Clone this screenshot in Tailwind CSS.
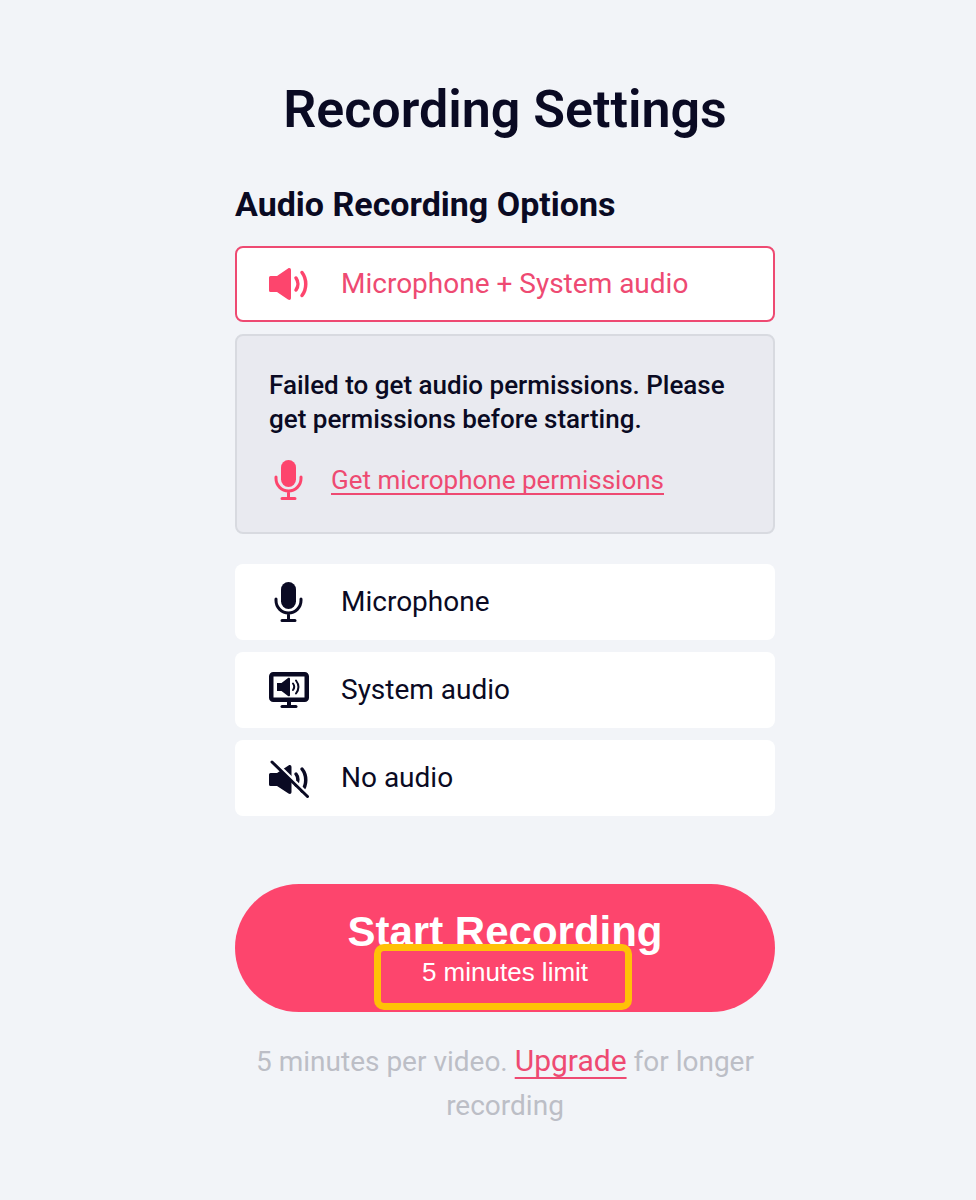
<!DOCTYPE html>
<html lang="en">
<head>
    <meta charset="UTF-8">
    <title>Recording Settings</title>
    <script src="https://cdn.jsdelivr.net/npm/@tailwindcss/browser@4"></script>
</head>
<body class="bg-[#f2f4f8] font-['Roboto',sans-serif] text-[#0a0a23]">
    <div class="h-[1200px] w-[540px] ml-[235px] pt-[80px]">
        <h1 class="text-center text-[52px] leading-[60px] font-semibold">Recording Settings</h1>
        <h2 class="mt-[44px] text-[34px] leading-[40px] font-bold">Audio Recording Options</h2>

        <!-- Options -->
        <div class="mt-[22px] h-[76px] flex items-center rounded-[8px] border-2 border-[#ee4a72] bg-white pl-[32px] text-[#ee4a72]">
            <svg class="w-[42px] h-[42px] text-[#fd456d]" viewBox="0 0 42 42" fill="none">
                <path d="M0 14.500A1.500 1.500 0 0 1 1.500 13H8L19 5.500c1.500-1 3-.3 3 1.500v28c0 1.800-1.500 2.500-3 1.500L8 29H1.500A1.500 1.500 0 0 1 0 27.500z" fill="currentColor"/>
                <path d="M27 15c2.500 3.500 2.500 8.500 0 12M33 9.500c5 6.500 5 16.500 0 23" stroke="currentColor" stroke-width="3.500" stroke-linecap="round"/>
            </svg>
            <span class="ml-[30px] text-[28px]">Microphone + System audio</span>
        </div>

        <div class="mt-[12px] h-[200px] rounded-[8px] border-2 border-[#d8dae0] bg-[#e9eaf0] pl-[32px] pr-[20px] pt-[32px]">
            <p class="text-[26px] leading-[34px] font-medium">Failed to get audio permissions. Please get permissions before starting.</p>
            <div class="mt-[23px] flex items-center text-[#ee4a72]">
                <svg class="w-[42px] h-[42px] text-[#fd456d]" viewBox="0 0 42 42" fill="none">
                    <rect x="12" y="1" width="15" height="27" rx="7.500" fill="currentColor"/>
                    <path d="M7 18v1.500a12.500 12.500 0 0 0 25 0V18M19.500 33v6M13 39.500h13" stroke="currentColor" stroke-width="3" stroke-linecap="round"/>
                </svg>
                <a class="ml-[20px] text-[26px] underline decoration-2 underline-offset-[4px] [text-decoration-skip-ink:none]">Get microphone permissions</a>
            </div>
        </div>

        <div class="mt-[30px] h-[76px] flex items-center rounded-[8px] bg-white pl-[34px]">
            <svg class="w-[42px] h-[42px]" viewBox="0 0 42 42" fill="none">
                <rect x="12" y="1" width="15" height="27" rx="7.500" fill="currentColor"/>
                <path d="M7 18v1.500a12.500 12.500 0 0 0 25 0V18M19.500 33v6M13 39.500h13" stroke="currentColor" stroke-width="3" stroke-linecap="round"/>
            </svg>
            <span class="ml-[30px] text-[28px]">Microphone</span>
        </div>
        <div class="mt-[12px] h-[76px] flex items-center rounded-[8px] bg-white pl-[34px]">
            <svg class="w-[42px] h-[42px]" viewBox="0 0 42 42" fill="none">
                <rect x="2.250" y="5.250" width="35.500" height="25.500" rx="2" stroke="currentColor" stroke-width="4.500"/>
                <path d="M20 32v5" stroke="currentColor" stroke-width="4"/>
                <path d="M13 37.500h14" stroke="currentColor" stroke-width="3" stroke-linecap="round"/>
                <path d="M8 14h4.500l6.500-5c.8-.5 2-.2 2 .8v16.400c0 1-1.200 1.300-2 .8L12.500 22H8z" fill="currentColor"/>
                <path d="M24 14.500c1.500 2 1.500 4.500 0 6.500M27 11.500c3 4 3 9 0 13" stroke="currentColor" stroke-width="2" stroke-linecap="round"/>
            </svg>
            <span class="ml-[30px] text-[28px]">System audio</span>
        </div>
        <div class="mt-[12px] h-[76px] flex items-center rounded-[8px] bg-white pl-[34px]">
            <svg class="w-[42px] h-[42px]" viewBox="0 0 42 42" fill="none">
                <path d="M0 17.500A1.500 1.500 0 0 1 1.500 16H8L19.500 8.500c1.500-1 3-.3 3 1.500v25c0 1.800-1.500 2.500-3 1.500L8 29H1.500A1.500 1.500 0 0 1 0 27.500z" fill="currentColor"/>
                <path d="M27 17c2.500 3 2.500 8 0 11M33 12c5 6 5 16 0 22" stroke="currentColor" stroke-width="3.500" stroke-linecap="round"/>
                <path d="M4 3l36 35" stroke="#fff" stroke-width="3"/>
                <path d="M3 5l35.500 34.500" stroke="currentColor" stroke-width="3" stroke-linecap="round"/>
            </svg>
            <span class="ml-[30px] text-[28px]">No audio</span>
        </div>

        <!-- Start button with the highlighted limit box over it -->
        <div class="relative mt-[68px] h-[128px] rounded-[64px] bg-[#fd456d] pt-[24px] text-center font-['Liberation_Sans',sans-serif] text-[42px] leading-[48px] font-bold text-white">
            Start Recording
            <div class="absolute left-[139px] top-[60px] flex h-[66px] w-[258px] items-center justify-center rounded-[10px] border-[7px] border-[#ffc107] bg-[#fd456d] pl-[4px] pb-[10px] text-[26px] font-normal">5 minutes limit</div>
        </div>

        <p class="mt-[27px] text-center text-[28px] leading-[44px] text-[#bcbec6]">5 minutes per video. <a class="text-[30px] text-[#ee4a72] underline decoration-2 underline-offset-[6px] [text-decoration-skip-ink:none]">Upgrade</a> for longer recording</p>
    </div>
</body>
</html>
